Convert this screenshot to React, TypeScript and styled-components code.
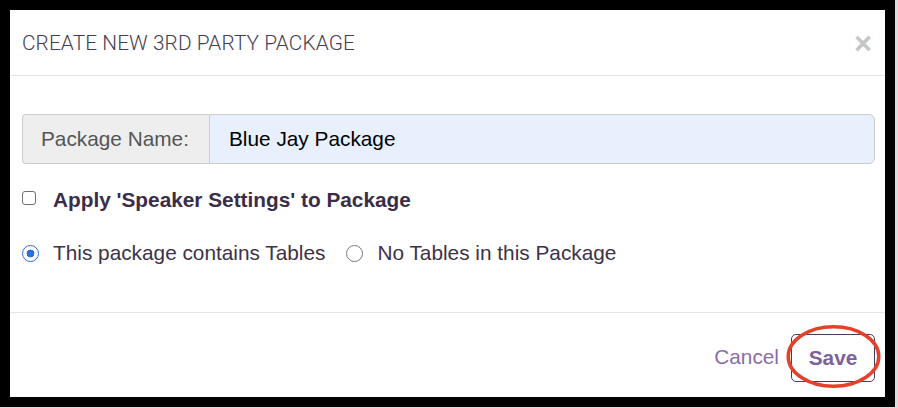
import { createGlobalStyle, styled } from 'styled-components';

const GlobalStyle = createGlobalStyle`
  html, body {
    margin: 0;
    padding: 0;
    background: #dcdcdc;
  }
  body {
    font-family: 'Liberation Sans', Arial, sans-serif;
  }
`;

const Frame = styled.div`
  box-sizing: border-box;
  width: 895px;
  height: 407px;
  border: 10px solid #000;
  background: #000;
`;

const Dialog = styled.div`
  display: flex;
  flex-direction: column;
  height: 100%;
  background: #fff;
`;

const Header = styled.div`
  display: flex;
  align-items: center;
  justify-content: space-between;
  height: 65px;
  padding: 0 12px;
  border-bottom: 1px solid #e5e5e5;
`;

const Title = styled.h4`
  margin: 0;
  font-family: Roboto, 'Liberation Sans', sans-serif;
  font-weight: 300;
  font-size: 20.8px;
  color: #463d52;
  letter-spacing: 0.1px;
`;

const CloseButton = styled.span`
  font-family: 'Liberation Sans', Arial, sans-serif;
  font-weight: 700;
  font-size: 31px;
  line-height: 1;
  color: #c6c6c6;
  margin-right: 1px;
  margin-top: 1px;
`;

const Body = styled.div`
  flex: 1;
  padding: 38px 10px 0 12px;
  border-bottom: 1px solid #e5e5e5;
`;

const InputGroup = styled.div`
  display: flex;
  height: 50px;
  font-size: 20.8px;
`;

const Addon = styled.span`
  box-sizing: border-box;
  display: flex;
  align-items: center;
  padding: 0 18px;
  width: 187px;
  background: #eeeeee;
  border: 1px solid #cccccc;
  border-right: none;
  border-radius: 4px 0 0 4px;
  color: #555;
`;

const TextInput = styled.div`
  box-sizing: border-box;
  flex: 1;
  display: flex;
  align-items: center;
  padding: 0 19px;
  background: #e8f0fe;
  border: 1px solid #cccccc;
  border-radius: 0 6px 6px 0;
  color: #000;
`;

const CheckRow = styled.label`
  display: flex;
  align-items: center;
  gap: 17px;
  margin-top: 24px;
  font-size: 20.8px;
  font-weight: 700;
  color: #3a2d47;
`;

const Checkbox = styled.span`
  box-sizing: border-box;
  width: 14px;
  height: 14px;
  border: 1px solid #6f6f6f;
  border-radius: 3px;
  background: #fff;
  margin-top: -4px;
`;

const RadioRow = styled.div`
  display: flex;
  align-items: center;
  margin-top: 29px;
  font-size: 20.8px;
  color: #3d3249;
`;

const RadioOption = styled.label`
  display: flex;
  align-items: center;
  gap: 14px;
  margin-right: 21px;
`;

const Radio = styled.span<{ $checked?: boolean }>`
  box-sizing: border-box;
  width: 17px;
  height: 17px;
  border-radius: 50%;
  border: ${p => (p.$checked ? '1.5px solid #2c6fe3' : '1px solid #7a7a7a')};
  background: ${p => (p.$checked ? 'radial-gradient(circle, #2c6fe3 0 3.6px, #fff 4.2px)' : '#fff')};
`;

const Footer = styled.div`
  display: flex;
  align-items: center;
  justify-content: flex-end;
  gap: 12px;
  height: 84px;
  padding: 6px 10px 0 12px;
  box-sizing: border-box;
`;

const LinkButton = styled.span`
  font-size: 20.8px;
  color: #8c6ca9;
  margin-top: -3px;
`;

const SaveWrap = styled.div`
  position: relative;
`;

const SaveButton = styled.span`
  box-sizing: border-box;
  display: flex;
  align-items: center;
  justify-content: center;
  width: 84px;
  height: 48px;
  border: 1px solid #4b3a5c;
  border-radius: 5px;
  font-size: 20.8px;
  font-weight: 700;
  color: #7e5fa0;
`;

const Annotation = styled.svg`
  position: absolute;
  left: -5px;
  top: -9px;
  width: 95px;
  height: 63px;
  overflow: visible;
  pointer-events: none;
`;

export default function App() {
  return (
    <>
      <GlobalStyle />
      <Frame>
        <Dialog>
          <Header>
            <Title>CREATE NEW 3RD PARTY PACKAGE</Title>
            <CloseButton>×</CloseButton>
          </Header>
          <Body>
            <InputGroup>
              <Addon>Package Name:</Addon>
              <TextInput>Blue Jay Package</TextInput>
            </InputGroup>
            <CheckRow>
              <Checkbox />
              Apply 'Speaker Settings' to Package
            </CheckRow>
            <RadioRow>
              <RadioOption>
                <Radio $checked />
                This package contains Tables
              </RadioOption>
              <RadioOption>
                <Radio />
                No Tables in this Package
              </RadioOption>
            </RadioRow>
          </Body>
          <Footer>
            <LinkButton>Cancel</LinkButton>
            <SaveWrap>
              <SaveButton>Save</SaveButton>
              <Annotation viewBox="0 0 95 63">
                <ellipse cx="47.5" cy="31.5" rx="45.3" ry="29.8" fill="none" stroke="#e4412b" strokeWidth="3.5" />
              </Annotation>
            </SaveWrap>
          </Footer>
        </Dialog>
      </Frame>
    </>
  );
}
